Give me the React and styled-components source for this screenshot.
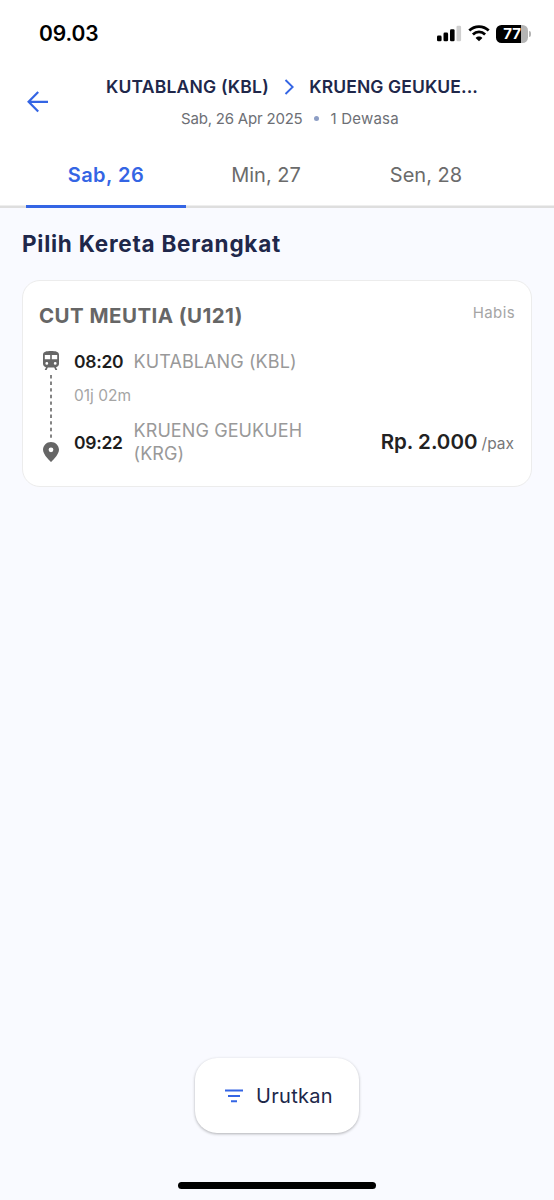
import styled, { createGlobalStyle } from 'styled-components';

const days = ['Sab, 26', 'Min, 27', 'Sen, 28'];

function App() {
  return (
    <Screen>
      <GlobalStyle />

      <StatusBar>
        <Clock>09.03</Clock>
        <StatusIcons>
          <SignalIcon />
          <WifiIcon />
          <Battery>
            <BatteryBody>77</BatteryBody>
            <BatteryTip />
          </Battery>
        </StatusIcons>
      </StatusBar>

      <Header>
        <BackButton aria-label="Kembali">
          <BackIcon />
        </BackButton>
        <HeaderText>
          <Route>
            <Station>KUTABLANG (KBL)</Station>
            <ChevronIcon />
            <Station>KRUENG GEUKUE...</Station>
          </Route>
          <TripInfo>
            <span>Sab, 26 Apr 2025</span>
            <Dot />
            <span>1 Dewasa</span>
          </TripInfo>
        </HeaderText>
      </Header>

      <Tabs>
        {days.map((day, i) =>
          <Tab key={day} $active={i === 0}>{day}</Tab>
        )}
      </Tabs>

      <Content>
        <Title>Pilih Kereta Berangkat</Title>

        <Card>
          <CardTop>
            <TrainName>CUT MEUTIA (U121)</TrainName>
            <Status>Habis</Status>
          </CardTop>
          <CardBody>
            <Timeline>
              <TrainIcon />
              <DashIcon />
              <PinIcon />
            </Timeline>
            <Stops>
              <Stop>
                <Time>08:20</Time>
                <Place>KUTABLANG (KBL)</Place>
              </Stop>
              <Duration>01j 02m</Duration>
              <Stop>
                <Time>09:22</Time>
                <Place>KRUENG GEUKUEH (KRG)</Place>
              </Stop>
            </Stops>
            <Price>Rp. 2.000 <span>/pax</span></Price>
          </CardBody>
        </Card>
      </Content>

      <Footer>
        <SortButton>
          <SortIcon />
          Urutkan
        </SortButton>
        <HomeIndicator />
      </Footer>
    </Screen>
  );
}

export default App;

const SignalIcon = () => (
  <svg width="26" height="17" viewBox="0 0 26 17">
    <rect x="1" y="10.6" width="4.6" height="5.6" rx="1.3" fill="#000" />
    <rect x="7.5" y="7.6" width="4.6" height="8.6" rx="1.3" fill="#000" />
    <rect x="14" y="4.2" width="4.6" height="12" rx="1.3" fill="#000" />
    <rect x="20.5" y="0.8" width="4.6" height="15.4" rx="1.3" fill="#cfcfcf" />
  </svg>
)

const WifiIcon = () => (
  <svg width="22" height="17" viewBox="0 0 22 17" fill="none" stroke="#000" strokeWidth="2.8">
    <path d="M1.3 5.6C6.8 .4 15.2 .4 20.7 5.6" />
    <path d="M4.9 9.4C8.4 6.1 13.6 6.1 17.1 9.4" />
    <path d="M11 16.2L7.6 12.9C9.5 11 12.5 11 14.4 12.9Z" fill="#000" stroke="none" />
  </svg>
)

const BackIcon = () => (
  <svg width="22" height="22" viewBox="0 0 22 22" fill="none" stroke="#3465e4" strokeWidth="2.2">
    <path d="M21 10.8H2M11.2 1.1L1.6 10.8L11.2 20.5" />
  </svg>
)

const ChevronIcon = () => (
  <svg width="10" height="16" viewBox="0 0 10 16" fill="none" stroke="#3465e4" strokeWidth="1.9">
    <path d="M1.5 1L8.7 8L1.5 15" />
  </svg>
)

const TrainIcon = () => (
  <svg width="18" height="20" viewBox="0 0 18 20">
    <path
      fill="#666"
      fillRule="evenodd"
      d="M9 .9C4.5 .9 1 1.4 1 4.7V13.8C1 15.6 2.3 17.1 4 17.3L2.7 20H4.6L5.8 17.6H12.2L13.4 20H15.3L14 17.3C15.7 17.1 17 15.6 17 13.8V4.7C17 1.4 13.5 .9 9 .9ZM2.8 5H8.2V9.3H2.8ZM9.8 5H15.2V9.3H9.8ZM4.8 12A1.4 1.4 0 1 1 4.8 14.8A1.4 1.4 0 1 1 4.8 12ZM13.2 12A1.4 1.4 0 1 1 13.2 14.8A1.4 1.4 0 1 1 13.2 12Z"
    />
  </svg>
)

const DashIcon = () => (
  <svg width="2" height="65" viewBox="0 0 2 65">
    <path d="M1 1V65" stroke="#666" strokeWidth="1.6" strokeDasharray="3.4 3.2" />
  </svg>
)

const PinIcon = () => (
  <svg width="16" height="20" viewBox="0 0 16 20">
    <path
      fill="#666"
      fillRule="evenodd"
      d="M8 0C3.6 0 0 3.4 0 7.8C0 13 8 20 8 20S16 13 16 7.8C16 3.4 12.4 0 8 0ZM8 5.4A2.4 2.4 0 1 1 8 10.2A2.4 2.4 0 1 1 8 5.4Z"
    />
  </svg>
)

const SortIcon = () => (
  <svg width="18" height="14" viewBox="0 0 18 14" stroke="#3465e4" strokeWidth="2">
    <path d="M0 1.5H18M3 6.9H15M6 12.3H12" />
  </svg>
)

const GlobalStyle = createGlobalStyle`
  body {
    margin: 0;
    font-family: Inter, "Liberation Sans", sans-serif;
    background: #f9faff;
  }

  button {
    border: none;
    background: none;
    padding: 0;
    font-family: inherit;
  }
`

const Screen = styled.div`
  display: flex;
  flex-direction: column;
  height: 1200px;
  overflow: hidden;
  background: #f9faff;

  svg {
    display: block;
    flex: none;
  }
`

const StatusBar = styled.div`
  display: flex;
  justify-content: space-between;
  align-items: center;
  height: 67px;
  padding: 0 23px 0 39px;
  background: #fff;
`

const Clock = styled.div`
  font-size: 21px;
  font-weight: 600;
  letter-spacing: -0.1px;
  color: #000;
`

const StatusIcons = styled.div`
  display: flex;
  align-items: center;
  gap: 6px;
`

const Battery = styled.div`
  display: flex;
  align-items: center;
  gap: 1px;
`

const BatteryBody = styled.div`
  width: 32px;
  height: 18px;
  border-radius: 5.5px;
  background: linear-gradient(to right, #000 77%, #b4b4b4 77%);
  color: #fff;
  font-size: 15px;
  font-weight: 700;
  letter-spacing: -0.2px;
  line-height: 18px;
  text-align: center;
`

const BatteryTip = styled.div`
  width: 2px;
  height: 6px;
  border-radius: 0 3px 3px 0;
  background: #b4b4b4;
`

const Header = styled.div`
  display: flex;
  height: 77px;
  background: #fff;
`

const BackButton = styled.button`
  width: 106px;
  padding: 24px 0 0 27px;
  align-self: flex-start;
`

const HeaderText = styled.div`
  width: 372px;
  padding-top: 8px;
`

const Route = styled.div`
  display: flex;
  align-items: center;
  justify-content: space-between;
  height: 23px;
`

const Station = styled.div`
  font-size: 17.5px;
  font-weight: 600;
  letter-spacing: 0.2px;
  color: #20274a;
  white-space: nowrap;

  &:last-child {
    letter-spacing: 0.1px;
  }
`

const TripInfo = styled.div`
  display: flex;
  align-items: center;
  height: 22px;
  margin-top: 9px;
  gap: 11.5px;
  padding-left: 75px;
  font-size: 15px;
  letter-spacing: -0.2px;
  color: #6d6f75;

  span:last-child {
    letter-spacing: 0.2px;
  }
`

const Dot = styled.div`
  width: 5px;
  height: 5px;
  border-radius: 50%;
  background: #8d9ec5;
`

const Tabs = styled.div`
  display: flex;
  height: 61px;
  padding-left: 26px;
  background: #fff;
  box-shadow: inset 0 -2.5px #dedede;
  padding-bottom: 3px;
  margin-bottom: -3px;
`

const Tab = styled.div`
  width: 160px;
  height: 64px;
  box-sizing: border-box;
  line-height: 63px;
  text-align: center;
  font-size: 20px;
  font-weight: ${p => p.$active ? 600 : 400};
  letter-spacing: ${p => p.$active ? '0.5px' : '0'};
  color: ${p => p.$active ? '#3465e4' : '#6b6b6b'};
  border-bottom: ${p => p.$active ? '3px solid #3465e4' : 'none'};
`

const Content = styled.div`
  flex: 1;
  padding: 24px 22px 0;
`

const Title = styled.h1`
  margin: 0;
  font-size: 22.5px;
  font-weight: 650;
  letter-spacing: 0.75px;
  line-height: 30px;
  color: #20274a;
`

const Card = styled.div`
  box-sizing: border-box;
  height: 207px;
  margin-top: 21px;
  padding: 23px 16px 0;
  background: #fff;
  border: 1px solid #ececec;
  border-radius: 18px;
`

const CardTop = styled.div`
  display: flex;
  justify-content: space-between;
`

const TrainName = styled.div`
  font-size: 20.5px;
  font-weight: 650;
  letter-spacing: 0.45px;
  line-height: 24px;
  color: #666;
`

const Status = styled.div`
  font-size: 15px;
  letter-spacing: 0.4px;
  line-height: 17px;
  color: #a5a5a5;
`

const CardBody = styled.div`
  display: flex;
  margin-top: 22px;
`

const Timeline = styled.div`
  display: flex;
  flex-direction: column;
  align-items: center;
  width: 24px;
  height: 112px;
  justify-content: space-between;
`

const Stops = styled.div`
  width: 240px;
  margin-left: 11px;
`

const Stop = styled.div`
  display: flex;
  align-items: center;
`

const Time = styled.div`
  width: 59.5px;
  font-size: 17.5px;
  font-weight: 600;
  letter-spacing: -0.3px;
  color: #1d1d1d;
`

const Place = styled.div`
  width: 176px;
  font-size: 18px;
  letter-spacing: 0.1px;
  line-height: 23px;
  color: #999;
`

const Duration = styled.div`
  margin: 13px 0;
  font-size: 15.5px;
  line-height: 20px;
  color: #a5a5a5;
`

const Price = styled.div`
  flex: 1;
  align-self: flex-end;
  margin-bottom: 11px;
  padding-right: 1px;
  text-align: right;
  white-space: nowrap;
  font-size: 20.5px;
  font-weight: 600;
  color: #222;

  span {
    font-size: 15.5px;
    font-weight: 400;
    margin-left: -1px;
    color: #777;
  }
`

const Footer = styled.div`
  display: flex;
  flex-direction: column;
  align-items: center;
  justify-content: space-between;
  height: 131px;
  padding-bottom: 11px;
`

const SortButton = styled.button`
  display: flex;
  align-items: center;
  justify-content: center;
  gap: 13px;
  width: 164px;
  height: 75px;
  padding-left: 4px;
  border-radius: 22px;
  background: #fff;
  box-shadow: 0 1px 3px rgba(0, 0, 0, .3);
  font-size: 20px;
  letter-spacing: 0.3px;
  color: #20274a;
`

const HomeIndicator = styled.div`
  width: 198px;
  height: 7px;
  border-radius: 4px;
  background: #000;
`
